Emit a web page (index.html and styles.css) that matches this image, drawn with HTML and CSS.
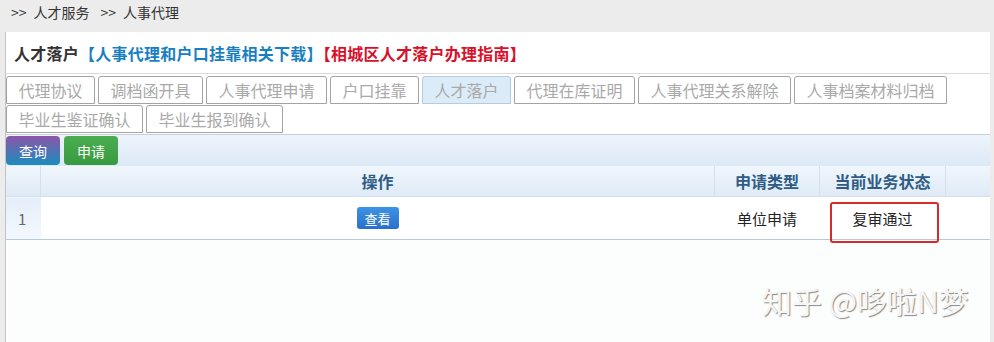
FILE: index.html
```html
<!DOCTYPE html>
<html lang="zh-CN">

<head>
    <meta charset="UTF-8">
    <title>人才落户</title>
    <link rel="stylesheet" href="styles.css">
</head>

<body>
    <div class="crumb"><span class="sep">&gt;&gt;</span>人才服务<span class="sep">&gt;&gt;</span>人事代理</div>

    <div id="panel">
        <h2 class="title">人才落户<span class="blue">【人事代理和户口挂靠相关下载】</span><span class="red">【相城区人才落户办理指南】</span></h2>

        <div class="tabs">
            <span class="tab">代理协议</span>
            <span class="tab">调档函开具</span>
            <span class="tab">人事代理申请</span>
            <span class="tab">户口挂靠</span>
            <span class="tab active">人才落户</span>
            <span class="tab">代理在库证明</span>
            <span class="tab">人事代理关系解除</span>
            <span class="tab">人事档案材料归档</span>
            <span class="tab">毕业生鉴证确认</span>
            <span class="tab">毕业生报到确认</span>
        </div>

        <div class="toolbar">
            <button class="btn btn-query">查询</button>
            <button class="btn btn-apply">申请</button>
        </div>

        <table class="grid">
            <thead>
                <tr>
                    <th class="num"></th>
                    <th class="op">操作</th>
                    <th class="type">申请类型</th>
                    <th class="state">当前业务状态</th>
                    <th></th>
                </tr>
            </thead>
            <tbody>
                <tr>
                    <td class="num">1</td>
                    <td class="op"><button class="btn-view">查看</button></td>
                    <td class="type">单位申请</td>
                    <td class="state">复审通过<span class="mark"></span></td>
                    <td></td>
                </tr>
            </tbody>
        </table>
    </div>

    <div class="watermark">知乎 @哆啦N梦</div>
</body>

</html>
```

FILE: styles.css
```css
body {
    margin: 0;
    height: 342px;
    overflow: hidden;
    background: #ececec;
    font-family: "Noto Sans CJK SC", "Noto Sans", sans-serif;
    color: #333;
    position: relative;
}

.crumb {
    height: 32px;
    line-height: 25px;
    padding-left: 11px;
    font-size: 14px;
    color: #333;
    white-space: nowrap;
}

.crumb .sep {
    margin-right: 7px;
}

.crumb .sep + .sep,
.crumb .sep:nth-of-type(2) {
    margin-left: 11px;
}

#panel {
    margin: 0 4px 0 5px;
    height: 310px;
    background: #fcfdfd;
    border-left: 1px solid #c4c4c4;
}

.title {
    margin: 0;
    height: 41px;
    line-height: 42px;
    padding-left: 8px;
    font-size: 16px;
    font-weight: bold;
    letter-spacing: 0.25px;
    color: #333;
    background: #fff;
    border-bottom: 1px solid #dcdcdc;
}

.blue {
    color: #1a7fc1;
}

.red {
    color: #d9102a;
}

.tabs {
    display: flex;
    flex-wrap: wrap;
    column-gap: 3px;
    row-gap: 1px;
    padding-top: 2px;
    padding-bottom: 1px;
    background: #fff;
    border-bottom: 1px solid #c9cfd6;
}

.tab {
    height: 26px;
    line-height: 26px;
    padding: 0 11.5px;
    font-size: 16px;
    color: #a9a9a9;
    border: 1px solid #a3a3a3;
    border-radius: 3px 3px 0 0;
    background: #fff;
}

.tab.active {
    background: #dcebf8;
    border-color: #b5cbe0;
}

.toolbar {
    display: flex;
    gap: 4px;
    height: 30px;
    padding-top: 1px;
    background: linear-gradient(#edf4fc, #dce9f6);
}

.btn {
    width: 54px;
    height: 29px;
    border: 0;
    border-radius: 4px;
    color: #fff;
    font-family: inherit;
    font-size: 14px;
    padding: 0;
}

.btn-query {
    background: linear-gradient(#8d55a9, #1a8dbd);
}

.btn-apply {
    background: linear-gradient(#4aae50, #389a40);
}

.grid {
    width: 100%;
    border-collapse: collapse;
    table-layout: fixed;
}

.grid th {
    height: 30px;
    padding: 0;
    font-size: 16px;
    font-weight: bold;
    color: #2f5c84;
    background: linear-gradient(#f0f6fc, #deeaf6);
    border-left: 1px solid #d5e0eb;
    border-bottom: 1px solid #d5e0eb;
}

.grid th:first-child,
.grid td:first-child {
    border-left: 0;
}

.grid td {
    height: 42px;
    padding: 0;
    text-align: center;
    font-size: 15px;
    color: #222;
    background: #fff;
    border-bottom: 1px solid #b9c9d8;
}

.grid .num {
    width: 34px;
}

.grid .type {
    width: 104px;
}

.grid .state {
    width: 125px;
}

.grid th:last-child {
    width: 44px;
}

.grid td.num {
    color: #666;
    background: linear-gradient(#e4eef9, #f3f8fd);
    text-align: left;
    padding-left: 12px;
    width: 22px;
}

.grid td.state {
    position: relative;
}

.btn-view {
    width: 42px;
    height: 22px;
    padding: 0;
    border: 0;
    border-radius: 3px;
    background: linear-gradient(#3c93e6, #2a6fcc);
    color: #fff;
    font-family: inherit;
    font-size: 13px;
}

.mark {
    position: absolute;
    left: 10px;
    top: 5px;
    width: 105px;
    height: 37px;
    border: 2px solid #d42b2b;
    border-radius: 3px;
}

.watermark {
    position: absolute;
    left: 762px;
    top: 278px;
    font-size: 30px;
    color: #f6f6f6;
    text-shadow: 1px 1px 1px #8a8a8a;
    white-space: nowrap;
}
```
